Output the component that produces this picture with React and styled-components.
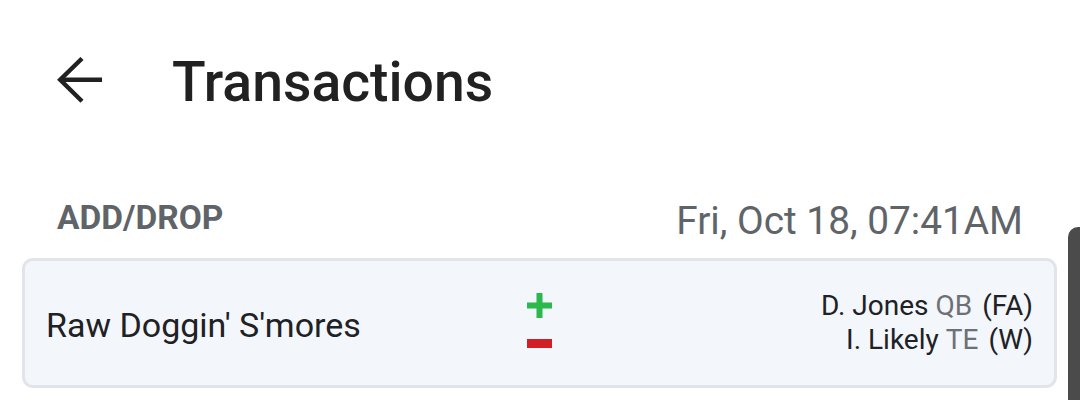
import React from "react";
import styled, { createGlobalStyle } from "styled-components";

const Global = createGlobalStyle`
  html, body { margin: 0; padding: 0; background: #ffffff; }
  body { font-family: Roboto, "Noto Sans", sans-serif; -webkit-font-smoothing: antialiased; }
`;

const Page = styled.div`
  position: relative;
  width: 1080px;
  height: 400px;
  overflow: hidden;
  background: #ffffff;
`;

const Header = styled.header`
  display: flex;
  align-items: flex-start;
  padding: 51px 0 0 57px;
  height: 64px;
`;

const BackButton = styled.button`
  display: flex;
  align-items: center;
  justify-content: center;
  width: 46px;
  height: 46px;
  margin-top: 6px;
  margin-right: 69px;
  padding: 0;
  border: none;
  background: transparent;
  color: #212121;
  cursor: pointer;
`;

const Title = styled.h1`
  margin: 0;
  font-size: 55.3px;
  line-height: 64px;
  font-weight: 500;
  color: #212121;
`;

const SectionHeader = styled.div`
  display: flex;
  justify-content: space-between;
  align-items: flex-start;
  margin-top: 83px;
  padding: 0 57px;
`;

const SectionLabel = styled.div`
  font-size: 33.5px;
  line-height: 40px;
  font-weight: 700;
  color: #5f6469;
`;

const SectionDate = styled.div`
  margin-top: 1px;
  font-size: 38.8px;
  line-height: 44px;
  font-weight: 400;
  color: #5f6469;
`;

const Card = styled.div`
  display: grid;
  grid-template-columns: 1fr auto 1fr;
  align-items: center;
  margin: 15px 23px 0 22px;
  padding: 28px 21px;
  border: 3px solid #e1e4e9;
  border-radius: 11px;
  background: #f3f6fa;
`;

const TeamName = styled.div`
  padding-top: 4px;
  font-size: 34px;
  line-height: 40px;
  color: #202124;
`;

const Moves = styled.div`
  display: flex;
  flex-direction: column;
  align-items: center;
  gap: 21px;
  align-self: start;
  margin-top: 4px;
`;

const Players = styled.div`
  justify-self: end;
  display: flex;
  flex-direction: column;
  align-items: flex-end;
`;

const PlayerLine = styled.div`
  font-size: 28px;
  line-height: 34px;
  color: #202124;
  white-space: nowrap;
`;

const Pos = styled.span`
  margin-left: 7px;
  color: #6d7176;
`;

const Source = styled.span`
  margin-left: 10px;
`;

const Handle = styled.div`
  position: absolute;
  right: 0;
  top: 227px;
  bottom: 0;
  width: 12px;
  background: #4b4b4b;
  border-top-left-radius: 10px;
`;

const ArrowIcon = () => (
  <svg width="46" height="46" viewBox="0 0 46 46" fill="none">
    <path d="M45 22.8H3" stroke="currentColor" strokeWidth="4.4" />
    <path d="M25 1.5L3.2 22.8L25 44.2" stroke="currentColor" strokeWidth="4.4" strokeLinejoin="miter" />
  </svg>
);

const PlusIcon = () => (
  <svg width="25" height="25" viewBox="0 0 25 25">
    <rect x="0" y="9.5" width="25" height="6" fill="#2bb84c" />
    <rect x="9.5" y="0" width="6" height="25" fill="#2bb84c" />
  </svg>
);

const MinusIcon = () => (
  <svg width="25" height="9" viewBox="0 0 25 9">
    <rect x="0" y="0" width="25" height="9" fill="#d21f26" />
  </svg>
);

const transactions = [
  {
    team: "Raw Doggin' S'mores",
    players: [
      { name: "D. Jones", pos: "QB", src: "(FA)" },
      { name: "I. Likely", pos: "TE", src: "(W)" },
    ],
  },
];

export default function App() {
  return (
    <>
      <Global />
      <Page>
        <Header>
          <BackButton aria-label="Back">
            <ArrowIcon />
          </BackButton>
          <Title>Transactions</Title>
        </Header>
        <SectionHeader>
          <SectionLabel>ADD/DROP</SectionLabel>
          <SectionDate>Fri, Oct 18, 07:41AM</SectionDate>
        </SectionHeader>
        {transactions.map((t) => (
          <Card key={t.team}>
            <TeamName>{t.team}</TeamName>
            <Moves>
              <PlusIcon />
              <MinusIcon />
            </Moves>
            <Players>
              {t.players.map((p) => (
                <PlayerLine key={p.name}>
                  {p.name}
                  <Pos>{p.pos}</Pos>
                  <Source>{p.src}</Source>
                </PlayerLine>
              ))}
            </Players>
          </Card>
        ))}
        <Handle />
      </Page>
    </>
  );
}
